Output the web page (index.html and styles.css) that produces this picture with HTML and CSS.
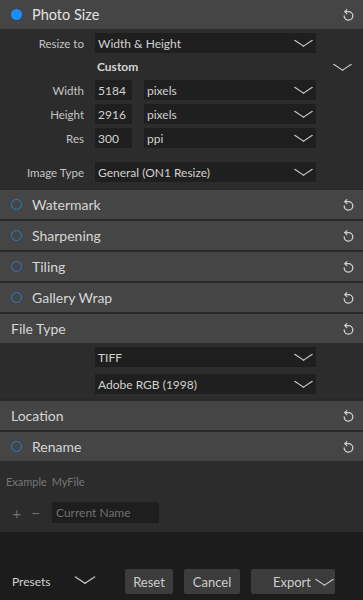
FILE: index.html
```html
<!DOCTYPE html>
<html lang="en">

<head>
    <meta charset="UTF-8">
    <meta name="viewport" content="width=device-width, initial-scale=1.0">
    <title>Export</title>
    <link rel="stylesheet" href="styles.css">
</head>

<body>
    <div class="panel">
        <!-- photo size -->
        <div class="head">
            <span class="dot on"></span>
            <span class="head-title big">Photo Size</span>
            <svg class="reset" viewBox="0 0 14 14"><path d="M4 3.6 H7.5 A4.3 4.3 0 1 1 3.2 8" /><path d="M5.8 1.6 L3.8 3.6 L5.8 5.6" /></svg>
        </div>
        <div class="body size">
            <div class="row">
                <span class="label">Resize to</span>
                <div class="select wide">Width &amp; Height<i class="chev"></i></div>
            </div>
            <div class="row custom">
                <span class="label"></span>
                <span class="custom-text">Custom</span>
                <i class="chev chev-out"></i>
            </div>
            <div class="row tight">
                <span class="label">Width</span>
                <div class="num">5184</div>
                <div class="select unit">pixels<i class="chev"></i></div>
            </div>
            <div class="row tight">
                <span class="label">Height</span>
                <div class="num">2916</div>
                <div class="select unit">pixels<i class="chev"></i></div>
            </div>
            <div class="row tight">
                <span class="label">Res</span>
                <div class="num">300</div>
                <div class="select unit">ppi<i class="chev"></i></div>
            </div>
            <div class="row type">
                <span class="label">Image Type</span>
                <div class="select wide">General (ON1 Resize)<i class="chev"></i></div>
            </div>
        </div>

        <div class="head">
            <span class="dot"></span>
            <span class="head-title">Watermark</span>
            <svg class="reset" viewBox="0 0 14 14"><path d="M4 3.6 H7.5 A4.3 4.3 0 1 1 3.2 8" /><path d="M5.8 1.6 L3.8 3.6 L5.8 5.6" /></svg>
        </div>
        <div class="head">
            <span class="dot"></span>
            <span class="head-title">Sharpening</span>
            <svg class="reset" viewBox="0 0 14 14"><path d="M4 3.6 H7.5 A4.3 4.3 0 1 1 3.2 8" /><path d="M5.8 1.6 L3.8 3.6 L5.8 5.6" /></svg>
        </div>
        <div class="head">
            <span class="dot"></span>
            <span class="head-title">Tiling</span>
            <svg class="reset" viewBox="0 0 14 14"><path d="M4 3.6 H7.5 A4.3 4.3 0 1 1 3.2 8" /><path d="M5.8 1.6 L3.8 3.6 L5.8 5.6" /></svg>
        </div>
        <div class="head">
            <span class="dot"></span>
            <span class="head-title">Gallery Wrap</span>
            <svg class="reset" viewBox="0 0 14 14"><path d="M4 3.6 H7.5 A4.3 4.3 0 1 1 3.2 8" /><path d="M5.8 1.6 L3.8 3.6 L5.8 5.6" /></svg>
        </div>

        <!-- file type -->
        <div class="head plain">
            <span class="head-title">File Type</span>
            <svg class="reset" viewBox="0 0 14 14"><path d="M4 3.6 H7.5 A4.3 4.3 0 1 1 3.2 8" /><path d="M5.8 1.6 L3.8 3.6 L5.8 5.6" /></svg>
        </div>
        <div class="body filetype">
            <div class="row">
                <span class="label"></span>
                <div class="select wide">TIFF<i class="chev"></i></div>
            </div>
            <div class="row gap7">
                <span class="label"></span>
                <div class="select wide">Adobe RGB (1998)<i class="chev"></i></div>
            </div>
        </div>

        <div class="head plain">
            <span class="head-title">Location</span>
            <svg class="reset" viewBox="0 0 14 14"><path d="M4 3.6 H7.5 A4.3 4.3 0 1 1 3.2 8" /><path d="M5.8 1.6 L3.8 3.6 L5.8 5.6" /></svg>
        </div>
        <div class="head">
            <span class="dot"></span>
            <span class="head-title">Rename</span>
            <svg class="reset" viewBox="0 0 14 14"><path d="M4 3.6 H7.5 A4.3 4.3 0 1 1 3.2 8" /><path d="M5.8 1.6 L3.8 3.6 L5.8 5.6" /></svg>
        </div>
        <div class="body rename">
            <div class="example">Example <span>MyFile</span></div>
            <div class="name-row">
                <span class="pm">+</span>
                <span class="pm">&minus;</span>
                <div class="name-input">Current Name</div>
            </div>
        </div>

        <!-- bottom bar -->
        <div class="footer">
            <span class="presets">Presets</span>
            <i class="chev chev-big"></i>
            <button class="btn reset-btn">Reset</button>
            <button class="btn cancel-btn">Cancel</button>
            <button class="btn export-btn">Export<i class="chev chev-btn"></i></button>
        </div>
    </div>
</body>

</html>
```

FILE: styles.css
```css
* {
    box-sizing: border-box;
}

body {
    margin: 0;
    background-color: #1c1c1c;
    font-family: Lato, "Open Sans", sans-serif;
    color: #cfcfcf;
}

.panel {
    width: 363px;
    height: 600px;
    display: flex;
    flex-direction: column;
    overflow: hidden;
}

.head {
    height: 31px;
    flex: none;
    display: flex;
    align-items: center;
    background-color: #454545;
    border-top: 2px solid #282828;
    padding: 0 8px 0 11px;
}

.head:first-child {
    height: 29px;
    border-top: none;
}

.head.plain {
    padding-left: 11px;
}

.dot {
    width: 11px;
    height: 11px;
    border-radius: 50%;
    border: 1.7px solid #1f7fd6;
    margin-right: 10px;
    flex: none;
}

.dot.on {
    border: none;
    background-color: #1a8cff;
    width: 11px;
    height: 11px;
}

.head-title {
    flex: 1;
    font-size: 14px;
    color: #d6d6d6;
}

.head-title.big {
    font-size: 14.5px;
    color: #e2e2e2;
}

.reset {
    width: 14px;
    height: 14px;
    fill: none;
    stroke: #cfcfcf;
    stroke-width: 1.3;
    stroke-linecap: round;
    stroke-linejoin: round;
}

.body {
    background-color: #2c2c2c;
    flex: none;
}

.row {
    display: flex;
    align-items: center;
    height: 20px;
}

.label {
    width: 84px;
    margin-right: 11px;
    text-align: right;
    font-size: 11.5px;
    color: #c4c4c4;
    flex: none;
}

.select,
.num {
    height: 20px;
    background-color: #1f1f1f;
    font-size: 12px;
    color: #d2d2d2;
    padding-left: 3px;
    display: flex;
    align-items: center;
}

.select {
    justify-content: space-between;
    padding-right: 3px;
}

.select.wide {
    width: 221px;
}

.num {
    width: 37px;
    margin-right: 12px;
}

.select.unit {
    width: 172px;
}

.chev {
    display: block;
    width: 9px;
    height: 9px;
    border-right: 1.4px solid #c8c8c8;
    border-bottom: 1.4px solid #c8c8c8;
    transform: scaleX(1.5) rotate(45deg);
    margin: 0 5px 5px 0;
}

.size {
    padding: 4px 0 6px;
}

.row.custom {
    height: 27px;
}

.custom-text {
    flex: 1;
    font-size: 12px;
    font-weight: 700;
    color: #d6d6d6;
    padding-left: 2px;
}

.chev-out {
    margin-right: 16px;
}

.row.tight {
    margin-bottom: 4px;
}

.row.tight:nth-child(5) {
    margin-bottom: 0;
}

.row.type {
    margin-top: 14px;
}

.filetype {
    padding: 4px 0 5px;
}

.gap7 {
    margin-top: 7px;
}

.rename {
    height: 71px;
    padding: 14px 6px 0;
}

.example {
    font-size: 11px;
    color: #767676;
}

.example span {
    margin-left: 2px;
}

.name-row {
    display: flex;
    align-items: center;
    margin-top: 14px;
    padding-left: 6px;
}

.pm {
    font-size: 16px;
    color: #6e6e6e;
    width: 19px;
    line-height: 16px;
}

.name-input {
    margin-left: 2px;
    width: 107px;
    height: 21px;
    background-color: #1e1e1e;
    font-size: 12px;
    color: #707070;
    padding-left: 4px;
    display: flex;
    align-items: center;
}

.footer {
    flex: 1;
    display: flex;
    align-items: flex-end;
    padding: 0 0 6px 12px;
    background-color: #1c1c1c;
}

.presets {
    font-size: 12px;
    color: #d2d2d2;
    width: 64px;
    line-height: 25px;
}

.chev-big {
    width: 10px;
    height: 10px;
    margin: 0 35px 12px 4px;
}

.btn {
    height: 25px;
    border: none;
    border-radius: 2px;
    background-color: #3c3c3c;
    color: #cdcdcd;
    font-family: Lato, "Open Sans", sans-serif;
    font-size: 13px;
    padding: 0;
}

.reset-btn {
    width: 48px;
}

.cancel-btn {
    width: 56px;
    margin-left: 11px;
}

.export-btn {
    width: 84px;
    margin-left: 11px;
    display: flex;
    align-items: center;
    justify-content: flex-end;
    padding-right: 2px;
}

.chev-btn {
    width: 9px;
    height: 9px;
    margin: 0 4px 5px 9px;
}
```
